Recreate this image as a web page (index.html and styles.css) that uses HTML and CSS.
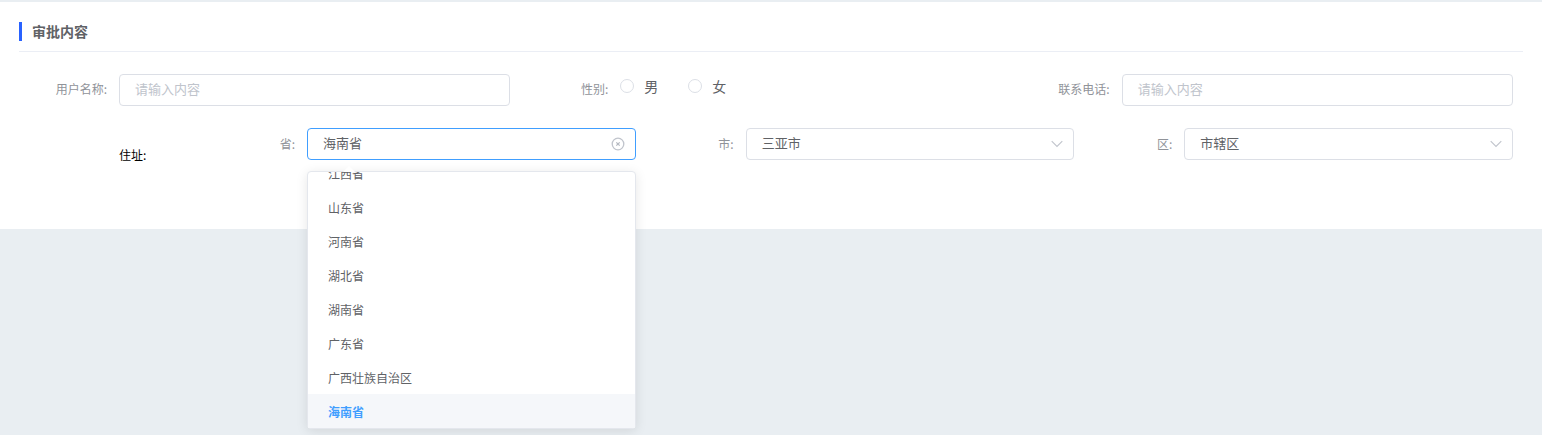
FILE: index.html
```html
<!DOCTYPE html>
<html lang="zh-CN">
<head>
  <meta charset="UTF-8">
  <title>审批内容</title>
  <link rel="stylesheet" href="styles.css">
</head>
<body>
<div class="panel">
  <div class="panel-title"><span>审批内容</span></div>
  <div class="form-row top">
    <div class="form-item">
      <label class="form-label">用户名称:</label>
      <div class="field placeholder">请输入内容</div>
    </div>
    <div class="form-item">
      <label class="form-label">性别:</label>
      <div class="radios">
        <span class="radio"><i></i>男</span>
        <span class="radio"><i></i>女</span>
      </div>
    </div>
    <div class="form-item">
      <label class="form-label">联系电话:</label>
      <div class="field placeholder">请输入内容</div>
    </div>
  </div>
  <div class="form-row address">
    <div class="address-label">住址:</div>
    <div class="address-cols">
      <div class="form-item">
        <label class="form-label">省:</label>
        <div class="field focused">
          海南省
          <svg class="clear-icon" width="14" height="14" viewBox="0 0 14 14" fill="none">
            <circle cx="7" cy="7" r="5.8" stroke="#c0c4cc" stroke-width="1.3"/>
            <path d="M5.3 5.3l3.4 3.4M8.7 5.3l-3.4 3.4" stroke="#b4b8c0" stroke-width="1.2"/>
          </svg>
          <div class="dropdown">
            <span class="dropdown-arrow"></span>
            <ul class="dropdown-list">
              <li>江西省</li>
              <li>山东省</li>
              <li>河南省</li>
              <li>湖北省</li>
              <li>湖南省</li>
              <li>广东省</li>
              <li>广西壮族自治区</li>
              <li class="selected">海南省</li>
            </ul>
          </div>
        </div>
      </div>
      <div class="form-item">
        <label class="form-label">市:</label>
        <div class="field">
          三亚市
          <svg class="arrow-icon" width="12" height="8" viewBox="0 0 12 8" fill="none"><path d="M.7 1.2L6 6.5l5.3-5.3" stroke="#c0c4cc" stroke-width="1.1"/></svg>
        </div>
      </div>
      <div class="form-item">
        <label class="form-label">区:</label>
        <div class="field">
          市辖区
          <svg class="arrow-icon" width="12" height="8" viewBox="0 0 12 8" fill="none"><path d="M.7 1.2L6 6.5l5.3-5.3" stroke="#c0c4cc" stroke-width="1.1"/></svg>
        </div>
      </div>
    </div>
  </div>
</div>
</body>
</html>
```

FILE: styles.css
```css
* {
  box-sizing: border-box;
}

html,
body {
  height: 100%;
}

body {
  margin: 0;
  padding-top: 2px;
  overflow: hidden;
  background: #e9eef2;
  font-family: "Noto Sans CJK SC", "Noto Sans", sans-serif;
  font-size: 13px;
  color: #606266;
}

.panel {
  height: 227px;
  padding: 20px 19px 0;
  background: #fff;
}

.panel-title {
  height: 30px;
  border-bottom: 1px solid #ebeef5;
}

.panel-title span {
  display: block;
  height: 19px;
  padding-left: 10px;
  border-left: 3px solid #2962ff;
  font-size: 14px;
  font-weight: 700;
  line-height: 18px;
}

.form-row {
  display: flex;
  margin-top: 22px;
}

.address {
  padding-left: 100px;
}

.form-item {
  flex: 1 1 0;
  display: flex;
  min-width: 0;
  padding-right: 10px;
}

.form-label {
  flex: none;
  width: 88px;
  margin-right: 12px;
  font-size: 12px;
  line-height: 32px;
  text-align: right;
  color: #909399;
}

.top .form-label {
  line-height: 30px;
}

.field {
  position: relative;
  flex: 1;
  height: 32px;
  padding: 0 15px;
  border: 1px solid #dcdfe6;
  border-radius: 4px;
  line-height: 28px;
}

.placeholder {
  color: #c0c4cc;
}

.focused {
  border-color: #409eff;
}

.clear-icon {
  position: absolute;
  top: 8px;
  right: 10px;
}

.arrow-icon {
  position: absolute;
  top: 11px;
  right: 10px;
}

.radios {
  display: flex;
  height: 24px;
  font-size: 14px;
  line-height: 24px;
}

.radio {
  display: flex;
  align-items: center;
  margin-right: 30px;
}

.radio i {
  width: 14px;
  height: 14px;
  margin-right: 10px;
  border: 1px solid #dcdfe6;
  border-radius: 50%;
}

.address-label {
  flex: none;
  width: 88px;
  padding-top: 17px;
  font-size: 12px;
  line-height: 20px;
  color: #000;
}

.address-cols {
  flex: 1;
  display: flex;
  min-width: 0;
}

.dropdown {
  position: absolute;
  top: 100%;
  left: -1px;
  right: -1px;
  margin-top: 12px;
  background: #fff;
  border: 1px solid #e4e7ed;
  border-radius: 4px;
  box-shadow: 0 2px 12px rgba(0, 0, 0, .1);
}

.dropdown-arrow {
  position: absolute;
  top: -6px;
  left: 35px;
  border-width: 0 6px 6px;
  border-style: solid;
  border-color: transparent transparent #fff;
}

.dropdown-list {
  display: flex;
  flex-direction: column;
  justify-content: flex-end;
  height: 256px;
  margin: 0;
  padding: 0;
  overflow: hidden;
  list-style: none;
}

.dropdown-list li {
  flex: none;
  height: 34px;
  padding: 0 20px;
  font-size: 12px;
  line-height: 36px;
}

.dropdown-list .selected {
  background: #f5f7fa;
  font-weight: 700;
  color: #409eff;
}
```
